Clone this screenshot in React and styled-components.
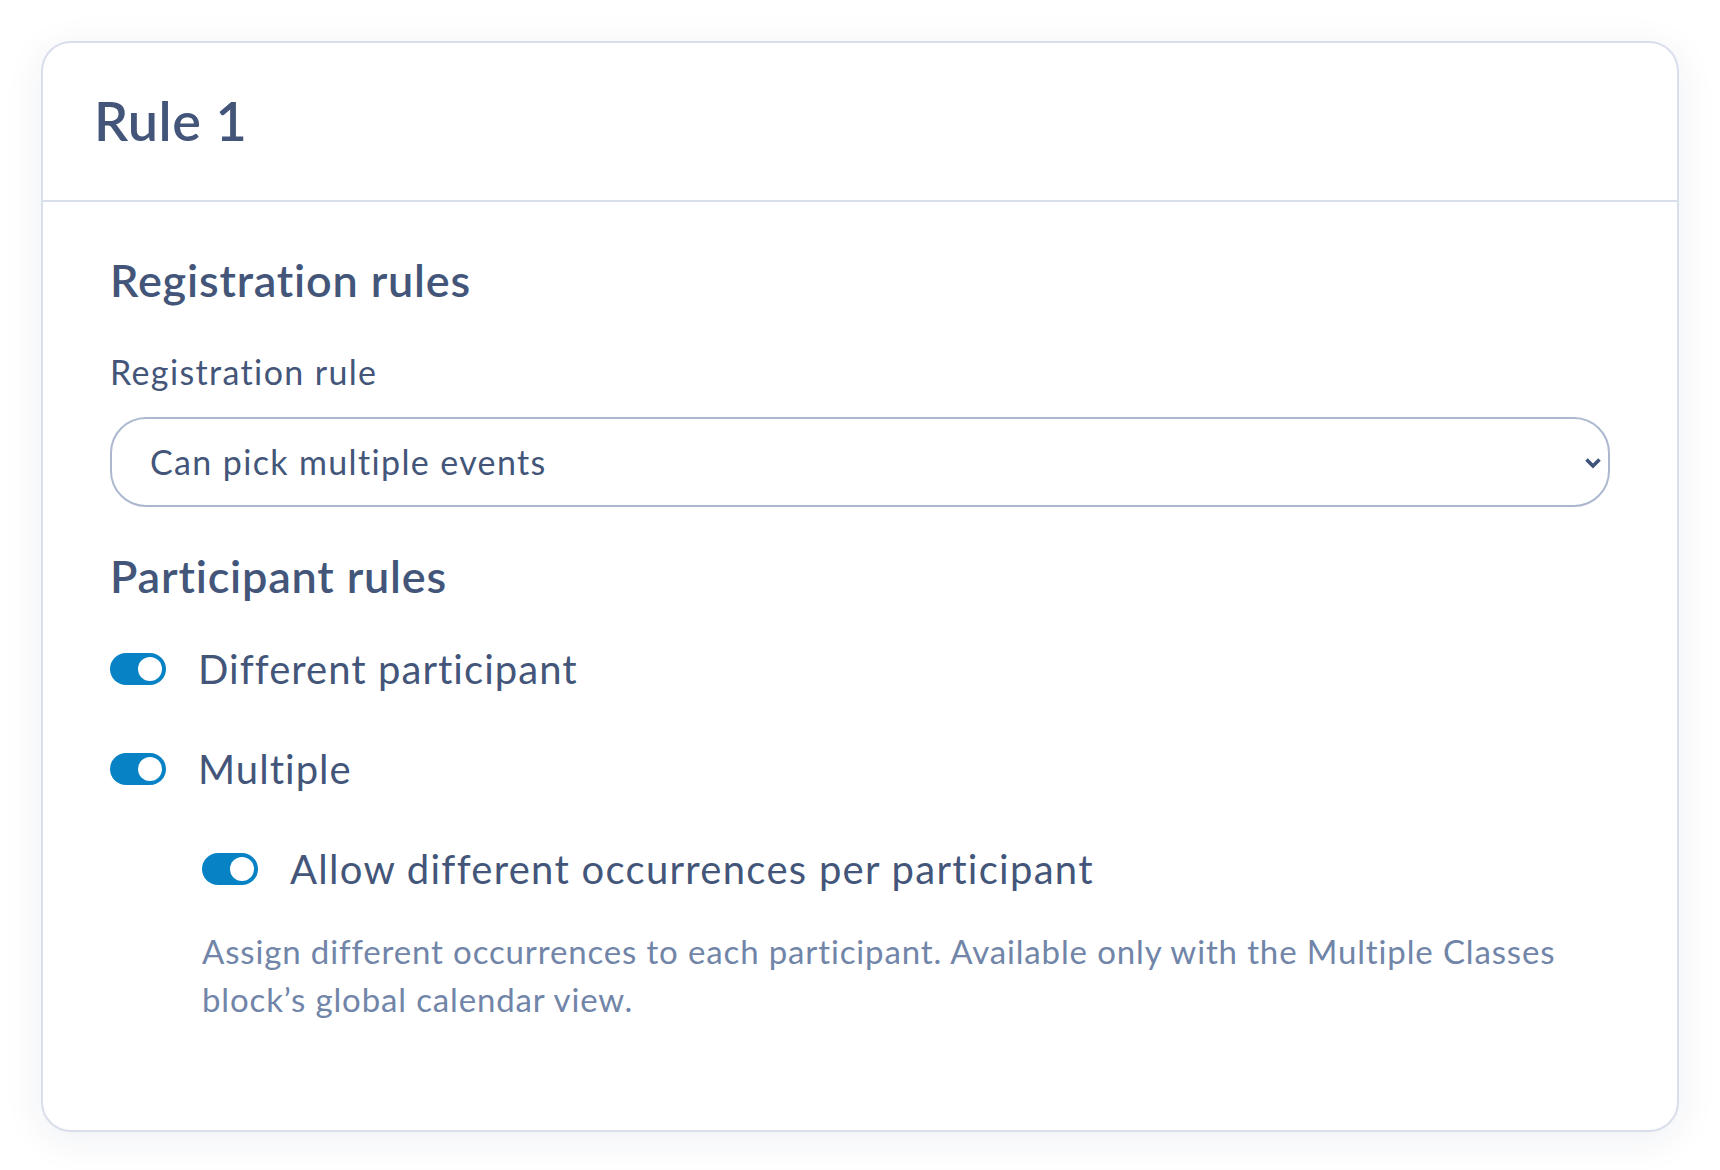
import React from 'react'
import styled, { createGlobalStyle } from 'styled-components'

const GlobalStyle = createGlobalStyle`
  html, body {
    margin: 0;
    padding: 0;
    background: #fff;
  }
  body {
    font-family: Lato, "Noto Sans", sans-serif;
    color: #43567a;
  }
`

const Page = styled.div`
  padding: 41px;
`

const Card = styled.div`
  background: #fff;
  border: 2px solid #d8deea;
  border-radius: 30px;
  box-shadow: 0 8px 40px rgba(30, 45, 80, 0.07);
`

const CardHeader = styled.div`
  height: 157px;
  display: flex;
  align-items: center;
  padding: 0 51px;
  border-bottom: 2px solid #d8deea;

  h2 {
    margin: 0;
    font-size: 54px;
    font-weight: 600;
    line-height: 1.2;
    letter-spacing: 0.01em;
  }
`

const CardBody = styled.div`
  padding: 51px 67px 107px;
`

const SectionTitle = styled.h3`
  margin: 0;
  margin-top: ${p => p.$top || 0}px;
  font-size: 45px;
  font-weight: 600;
  line-height: 1.2;
  letter-spacing: 0.018em;
`

const Label = styled.label`
  display: block;
  margin-top: 45px;
  font-size: 34px;
  line-height: 1.2;
  letter-spacing: 0.04em;
`

const SelectWrap = styled.div`
  position: relative;
  margin-top: 24px;

  svg {
    position: absolute;
    right: 8px;
    top: 40px;
    pointer-events: none;
  }
`

const Select = styled.select`
  appearance: none;
  width: 100%;
  height: 90px;
  box-sizing: border-box;
  padding: 0 60px 0 38px;
  border: 2px solid #adb8cf;
  border-radius: 36px;
  background: #fff;
  font-family: inherit;
  font-size: 34px;
  letter-spacing: 0.04em;
  color: #43567a;
  outline: none;
`

const ToggleList = styled.div`
  margin-top: 42px;
  display: flex;
  flex-direction: column;
  gap: 52px;
`

const Row = styled.div`
  display: flex;
  align-items: center;
  gap: 32px;
  margin-left: ${p => (p.$nested ? 92 : 0)}px;
  font-size: 40px;
  line-height: 48px;
  letter-spacing: ${p => (p.$nested ? 0.032 : 0.026)}em;
`

const Toggle = styled.span`
  flex: none;
  width: 56px;
  height: 32px;
  border-radius: 16px;
  background: #0783c5;
  display: flex;
  align-items: center;
  justify-content: flex-end;
  padding: 0 4px;
  box-sizing: border-box;

  &::after {
    content: '';
    width: 24px;
    height: 24px;
    border-radius: 50%;
    background: #fff;
  }
`

const Help = styled.p`
  margin: 34px 0 0 92px;
  font-size: 33px;
  line-height: 48px;
  letter-spacing: 0.026em;
  color: #7185a8;
`

const Chevron = () => (
  <svg width="18" height="12" viewBox="0 0 18 12">
    <polyline points="2.5,2.5 9,9 15.5,2.5" fill="none" stroke="#3f5278" strokeWidth="3.6" />
  </svg>
)

const App = () => {
  return (
    <>
      <GlobalStyle />
      <Page>
        <Card>
          <CardHeader>
            <h2>Rule 1</h2>
          </CardHeader>
          <CardBody>
            <SectionTitle>Registration rules</SectionTitle>
            <Label htmlFor="reg-rule">Registration rule</Label>
            <SelectWrap>
              <Select id="reg-rule" defaultValue="multiple">
                <option value="multiple">Can pick multiple events</option>
                <option value="single">Can pick one event</option>
              </Select>
              <Chevron />
            </SelectWrap>

            <SectionTitle $top={42}>Participant rules</SectionTitle>
            <ToggleList>
              <Row>
                <Toggle />
                <span>Different participant</span>
              </Row>
              <Row>
                <Toggle />
                <span>Multiple</span>
              </Row>
              <Row $nested>
                <Toggle />
                <span>Allow different occurrences per participant</span>
              </Row>
            </ToggleList>
            <Help>
              Assign different occurrences to each participant. Available only with the Multiple Classes block’s global calendar view.
            </Help>
          </CardBody>
        </Card>
      </Page>
    </>
  )
}

export default App
